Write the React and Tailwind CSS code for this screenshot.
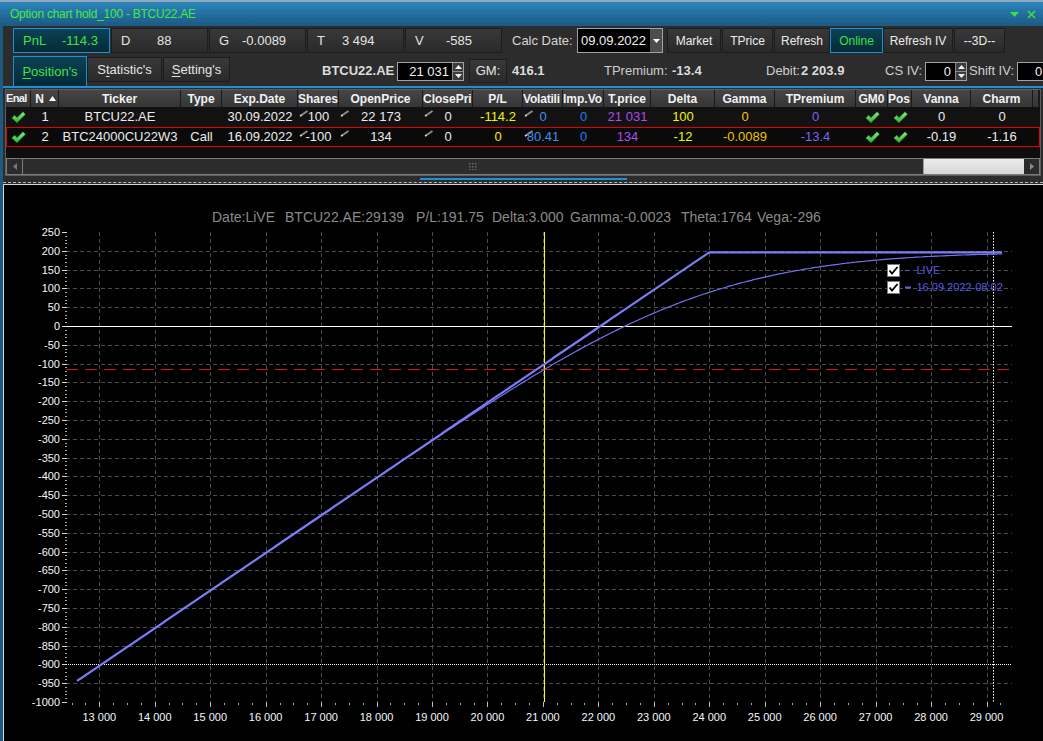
import React from "react";

// chart scale (page pixels)
const sx = (v) => 99.3 + (v - 13000) * 0.05545;
const sy = (p) => 326 - p * 0.376;

const ncdf = (x) => {
  const t = 1 / (1 + 0.2316419 * Math.abs(x));
  const d = 0.3989423 * Math.exp((-x * x) / 2);
  const p = d * t * (0.3193815 + t * (-0.3565638 + t * (1.781478 + t * (-1.821256 + t * 1.330274))));
  return x > 0 ? 1 - p : p;
};
const callPrice = (s) => {
  const k = 24000;
  const sq = 0.8041 * Math.sqrt(7 / 365);
  const d1 = (Math.log(s / k) + 0.5 * sq * sq) / sq;
  return s * ncdf(d1) - k * ncdf(d1 - sq);
};
const expiry = (s) => 0.1 * (s - 22173) + 13.4 - 0.1 * Math.max(s - 24000, 0);
const live = (s) => 0.1 * (s - 22173) + 13.4 - 0.1 * callPrice(s);

const curve = (f) => {
  const pts = [];
  for (let s = 12600; s <= 29280; s += 40) pts.push(`${sx(s).toFixed(1)},${sy(f(s)).toFixed(1)}`);
  return "M" + pts.join(" L");
};

const Check = () => (
  <svg width="15" height="13" viewBox="0 0 15 13">
    <defs>
      <linearGradient id="ck" x1="0" y1="0" x2="0" y2="1">
        <stop offset="0" stopColor="#8af08a" />
        <stop offset="1" stopColor="#2fae2f" />
      </linearGradient>
    </defs>
    <path d="M0.8 7 L3.6 4.3 L6 6.7 L12 0.8 L14.4 3.3 L6 11.8 Z" fill="url(#ck)" stroke="#238a23" strokeWidth="0.6" strokeLinejoin="round" />
  </svg>
);

const Pencil = () => (
  <svg width="10" height="7" viewBox="0 0 10 7" className="absolute left-[1px] top-[3px]">
    <path d="M1.5 5.8 L8.5 1" stroke="#8a8a8a" strokeWidth="2" />
    <path d="M1 6.2 L2.6 5.1" stroke="#d8d8d8" strokeWidth="1.6" />
  </svg>
);

const Spinner = () => (
  <div className="w-[11px] h-full flex flex-col border-l border-[#8a8a8a] bg-[#3c3c3c]">
    <div className="flex-1 flex items-center justify-center border-b border-[#8a8a8a]">
      <svg width="7" height="4" viewBox="0 0 7 4"><path d="M0 4 L3.5 0 L7 4 Z" fill="#f2f2f2" /></svg>
    </div>
    <div className="flex-1 flex items-center justify-center">
      <svg width="7" height="4" viewBox="0 0 7 4"><path d="M0 0 L3.5 4 L7 0 Z" fill="#f2f2f2" /></svg>
    </div>
  </div>
);

const stats = [
  { l: "PnL", v: "-114.3", lw: "w-[39px]", active: true },
  { l: "D", v: "88", lw: "w-[36px]" },
  { l: "G", v: "-0.0089", lw: "w-[23px]" },
  { l: "T", v: "3 494", lw: "w-[25px]" },
  { l: "V", v: "-585", lw: "w-[31px]" },
];

const buttons = [
  { t: "Market", w: "w-[54px] ml-[4px]" },
  { t: "TPrice", w: "w-[51px] ml-[1px]" },
  { t: "Refresh", w: "w-[56px] ml-[1px]" },
  { t: "Online", w: "w-[53px]", active: true },
  { t: "Refresh IV", w: "w-[70px]" },
  { t: "--3D--", w: "w-[51px] ml-[1px]" },
];

// header labels as the grid shows them (clipped by narrow columns)
const cols = [
  { h: "Enal", w: "w-[25px]", cls: "justify-start text-[11px] tracking-[-0.6px]" },
  { h: "N", w: "w-[28px]", sort: true },
  { h: "Ticker", w: "w-[122px]" },
  { h: "Type", w: "w-[41px]" },
  { h: "Exp.Date", w: "w-[76px]" },
  { h: "Shares", w: "w-[41px]", cls: "justify-start" },
  { h: "OpenPrice", w: "w-[84px]" },
  { h: "ClosePri", w: "w-[50px]", cls: "justify-start" },
  { h: "P/L", w: "w-[50px]" },
  { h: "Volatili", w: "w-[40px]", cls: "justify-start tracking-[-0.2px]" },
  { h: "Imp.Vo", w: "w-[41px]", cls: "justify-start" },
  { h: "T.price", w: "w-[47px]" },
  { h: "Delta", w: "w-[64px]" },
  { h: "Gamma", w: "w-[60px]" },
  { h: "TPremium", w: "w-[81px]" },
  { h: "GM0", w: "w-[32px]" },
  { h: "Pos", w: "w-[24px]", cls: "justify-start" },
  { h: "Vanna", w: "w-[59px]" },
  { h: "Charm", w: "w-[62px]" },
  { h: "", w: "w-[6px]" },
];

const YEL = "text-[#f4f400]";
const BLU = "text-[#3f8ff0]";
const BLU2 = "text-[#1f7cf2]";
const PUR = "text-[#b04ae8]";
const ORA = "text-[#f2c200]";
const VIO = "text-[#7a62f4]";

const rows = [
  [
    { check: true }, { v: "1" }, { v: "BTCU22.AE" }, { v: "" }, { v: "30.09.2022" },
    { v: "100", pen: true }, { v: "22 173", pen: true }, { v: "0", pen: true },
    { v: "-114.2", c: YEL }, { v: "0", c: BLU, pen: true }, { v: "0", c: BLU2 },
    { v: "21 031", c: PUR }, { v: "100", c: YEL }, { v: "0", c: ORA }, { v: "0", c: VIO },
    { check: true }, { check: true }, { v: "0" }, { v: "0" }, { v: "" },
  ],
  [
    { check: true }, { v: "2" }, { v: "BTC24000CU22W3" }, { v: "Call" }, { v: "16.09.2022" },
    { v: "-100", pen: true }, { v: "134", pen: true }, { v: "0", pen: true },
    { v: "0", c: YEL }, { v: "80.41", c: BLU, pen: true }, { v: "0", c: BLU2 },
    { v: "134", c: PUR }, { v: "-12", c: YEL }, { v: "-0.0089", c: ORA }, { v: "-13.4", c: VIO },
    { check: true }, { check: true }, { v: "-0.19" }, { v: "-1.16" }, { v: "" },
  ],
];

const titleParts = [
  [212, "Date:LiVE"],
  [285, "BTCU22.AE:29139"],
  [416, "P/L:191.75"],
  [492, "Delta:3.000"],
  [570, "Gamma:-0.0023"],
  [681, "Theta:1764"],
  [757, "Vega:-296"],
];

const Chart = () => {
  const yVals = [];
  for (let v = 250; v >= -1000; v -= 50) yVals.push(v);
  const yMinor = [];
  for (let v = 250; v >= -1000; v -= 10) if (v % 50 !== 0) yMinor.push(v);
  const xVals = [];
  for (let v = 13000; v <= 29000; v += 1000) xVals.push(v);
  const xMinor = [];
  for (let v = 12500; v <= 29250; v += 250) if (v % 1000 !== 0) xMinor.push(v);

  return (
    <svg width="1039" height="556" className="block">
      <g transform="translate(-4 -185)" fontFamily="'Liberation Sans', Arial, sans-serif">
        {titleParts.map(([x, t]) => (
          <text key={t} x={x} y={221.5} fontSize="14" fill="#8a8a8a">{t}</text>
        ))}

        {/* grid */}
        {yVals.filter((v) => v <= 200 && v >= -950 && v !== 0 && v !== -900).map((v) => (
          <line key={"h" + v} x1="66" x2="1012" y1={Math.round(sy(v)) + 0.5} y2={Math.round(sy(v)) + 0.5} stroke="#4c4c4c" strokeDasharray="4 3" />
        ))}
        {xVals.map((v) => (
          <g key={"v" + v}>
            <line x1={Math.round(sx(v)) + 0.5} x2={Math.round(sx(v)) + 0.5} y1="232" y2="702" stroke="#4c4c4c" strokeDasharray="4 3" />
            <line x1={Math.round(sx(v)) + 0.5} x2={Math.round(sx(v)) + 0.5} y1="702" y2="707" stroke="#bdbdbd" />
          </g>
        ))}
        {xMinor.map((v) => (
          <line key={"xm" + v} x1={Math.round(sx(v)) + 0.5} x2={Math.round(sx(v)) + 0.5} y1="703" y2="705" stroke="#a8a8a8" />
        ))}

        {/* y axis */}
        {yMinor.map((v) => (
          <line key={"ym" + v} x1="65" x2="67" y1={Math.round(sy(v)) + 0.5} y2={Math.round(sy(v)) + 0.5} stroke="#a8a8a8" />
        ))}
        {yVals.map((v) => (
          <g key={"yl" + v}>
            <line x1="62" x2="67" y1={Math.round(sy(v)) + 0.5} y2={Math.round(sy(v)) + 0.5} stroke="#d8d8d8" />
            <text x="60" y={sy(v) + 4} fontSize="11" textAnchor="end" fill="#f4f7ff">{v}</text>
          </g>
        ))}
        {xVals.map((v) => (
          <text key={"xl" + v} x={sx(v)} y="720.5" fontSize="11" textAnchor="middle" fill="#f4f7ff">
            {`${Math.floor(v / 1000)} 000`}
          </text>
        ))}

        {/* reference lines */}
        <line x1="66" x2="1012" y1="326.5" y2="326.5" stroke="#ffffff" />
        <line x1="66" x2="1012" y1="369.5" y2="369.5" stroke="#d01a1a" strokeDasharray="12 7" />
        <line x1="66" x2="1012" y1="664.5" y2="664.5" stroke="#ffffff" strokeDasharray="1 1" />
        <line x1="993.5" x2="993.5" y1="232" y2="702" stroke="#ffffff" strokeDasharray="1.5 1.5" />
        <line x1="544.5" x2="544.5" y1="232" y2="702" stroke="#ffff00" />

        {/* curves */}
        <path d={curve(live)} fill="none" stroke="#7272f2" strokeWidth="1.2" />
        <path d={curve(expiry)} fill="none" stroke="#7c7cf6" strokeWidth="2.2" />

        {/* legend */}
        <rect x="887.5" y="264.5" width="12" height="12" fill="#ffffff" stroke="#7a7a7a" />
        <path d="M889.5 270.5 L892 273.5 L897.5 267" fill="none" stroke="#000" strokeWidth="1.8" />
        <line x1="905" x2="909" y1="270.5" y2="270.5" stroke="#6060e6" />
        <text x="916.5" y="274.3" fontSize="11" fill="#5858e2">LIVE</text>
        <rect x="887.5" y="281.5" width="12" height="12" fill="#ffffff" stroke="#7a7a7a" />
        <path d="M889.5 287.5 L892 290.5 L897.5 284" fill="none" stroke="#000" strokeWidth="1.8" />
        <line x1="905" x2="911" y1="287.5" y2="287.5" stroke="#6060e6" strokeWidth="2" />
        <text x="916.5" y="291.3" fontSize="11" fill="#5858e2">16.09.2022-08:02</text>
      </g>
    </svg>
  );
};

const App = () => {
  return (
    <div className="w-[1043px] h-[741px] overflow-hidden flex flex-col bg-[#2c2c2c] font-['Liberation_Sans',Arial,sans-serif] text-[13px] text-[#e4e4e4]">
      {/* title bar */}
      <div className="h-[26px] shrink-0 flex items-center pl-[10px] pr-[7px] border-t-2 border-[#8ea8bc] bg-linear-to-b from-[#2c84bc] to-[#1b5a83]">
        <span className="text-[12px] tracking-[-0.25px] text-[#45ea45]">Option chart hold_100 - BTCU22.AE</span>
        <div className="ml-auto flex items-center gap-[8px]">
          <svg width="9" height="5" viewBox="0 0 9 5"><path d="M0 0 L9 0 L4.5 5 Z" fill="#3ee03e" /></svg>
          <svg width="9" height="9" viewBox="0 0 9 9"><path d="M1 1 L8 8 M8 1 L1 8" stroke="#3ee03e" strokeWidth="1.6" /></svg>
        </div>
      </div>

      <div className="flex flex-1 min-h-0">
        <div className="w-[3px] shrink-0 bg-[#1c5a80]" />
        <div className="flex-1 min-w-0 flex flex-col">
          {/* row 1: greeks + buttons */}
          <div className="mt-[2px] h-[25px] shrink-0 flex pl-[10px] overflow-hidden">
            <div className="flex gap-[1px]">
              {stats.map((s) => (
                <div
                  key={s.l}
                  className={`w-[97px] shrink-0 flex items-center pl-[9px] border ${
                    s.active
                      ? "border-[#1b8fd8] bg-linear-to-b from-[#0b4256] to-[#062a37] text-[#40e440]"
                      : "border-[#1d1d1d] bg-linear-to-b from-[#393939] to-[#2a2a2a]"
                  }`}
                >
                  <span className={s.lw}>{s.l}</span>
                  <span>{s.v}</span>
                </div>
              ))}
            </div>
            <span className="ml-[10px] w-[65px] shrink-0 self-center text-[#d6d6d6]">Calc Date:</span>
            <div className="w-[86px] shrink-0 flex bg-black border border-[#a2a2a2]">
              <span className="flex-1 self-center pl-[3px] text-[#f0f0f0]">09.09.2022</span>
              <div className="w-[12px] flex items-center justify-center bg-[#4d4d4d]">
                <svg width="7" height="4" viewBox="0 0 7 4"><path d="M0 0 L7 0 L3.5 4 Z" fill="#ffffff" /></svg>
              </div>
            </div>
            {buttons.map((b) => (
              <div
                key={b.t}
                className={`${b.w} shrink-0 flex items-center justify-center text-[12px] border ${
                  b.active
                    ? "border-[#1b8fd8] bg-linear-to-b from-[#0b4256] to-[#062a37] text-[#3ee03e]"
                    : "border-[#1d1d1d] bg-linear-to-b from-[#393939] to-[#292929] text-[#ececec]"
                }`}
              >
                {b.t}
              </div>
            ))}
          </div>

          {/* row 2: tabs + quote */}
          <div className="mt-[3px] h-[30px] shrink-0 flex items-center pl-[10px] overflow-hidden">
            <div className="w-[74px] shrink-0 self-stretch flex items-center justify-center border border-b-0 border-[#1b8fd8] bg-linear-to-b from-[#0b4256] to-[#062a37] text-[#40e440]">
              <span><span className="underline underline-offset-2">P</span>osition's</span>
            </div>
            <div className="w-[75px] h-[25px] shrink-0 self-start mt-[1px] flex items-center justify-center border border-[#1d1d1d] bg-linear-to-b from-[#393939] to-[#2a2a2a]">
              <span>S<span className="underline underline-offset-2">t</span>atistic's</span>
            </div>
            <div className="ml-[1px] w-[67px] h-[25px] shrink-0 self-start mt-[1px] flex items-center justify-center border border-[#1d1d1d] bg-linear-to-b from-[#393939] to-[#2a2a2a]">
              <span><span className="underline underline-offset-2">S</span>etting's</span>
            </div>
            <span className="ml-[92px] w-[75px] shrink-0 font-bold text-[#dcdcdc]">BTCU22.AE</span>
            <div className="w-[67px] h-[19px] shrink-0 flex bg-black border border-[#a2a2a2]">
              <span className="flex-1 text-right pr-[3px] leading-[17px] text-[#f0f0f0]">21 031</span>
              <Spinner />
            </div>
            <div className="ml-[5px] w-[38px] h-[24px] shrink-0 flex items-center justify-center border border-[#1d1d1d] bg-linear-to-b from-[#393939] to-[#2a2a2a]">GM:</div>
            <span className="ml-[5px] w-[92px] shrink-0 font-bold text-[#dcdcdc]">416.1</span>
            <span className="w-[68px] shrink-0 text-[#cfcfcf]">TPremium:</span>
            <span className="w-[94px] shrink-0 font-bold text-[#dcdcdc]">-13.4</span>
            <span className="w-[35px] shrink-0 text-[#cfcfcf]">Debit:</span>
            <span className="w-[84px] shrink-0 font-bold text-[#dcdcdc]">2 203.9</span>
            <span className="w-[40px] shrink-0 text-[#cfcfcf]">CS IV:</span>
            <div className="w-[42px] h-[19px] shrink-0 flex bg-black border border-[#a2a2a2]">
              <span className="flex-1 text-right pr-[4px] leading-[17px] text-[#f0f0f0]">0</span>
              <Spinner />
            </div>
            <span className="ml-[2px] w-[48px] shrink-0 text-[#cfcfcf]">Shift IV:</span>
            <div className="w-[40px] h-[19px] shrink-0 bg-black border border-[#a2a2a2] pl-[17px] leading-[17px] text-[#f0f0f0]">0</div>
          </div>

          <div className="h-[2px] shrink-0 bg-[#1b8fd8]" />

          {/* positions table */}
          <div className="mt-[1px] ml-[2px] w-[1036px] shrink-0 flex flex-col border border-[#5c5c5c] bg-[#0e0e0e]">
            <div className="h-[17px] flex bg-[#1c1c1c]">
              {cols.map((c, i) => (
                <div
                  key={i}
                  className={`${c.w} shrink-0 h-full flex items-center overflow-hidden whitespace-nowrap border-r border-[#1a1a1a] bg-linear-to-b from-[#464646] to-[#353535] font-bold text-[#f2f2f2] ${
                    c.cls || "justify-center text-[12px]"
                  } ${c.cls && !c.cls.includes("text-[11px]") ? "text-[12px]" : ""}`}
                >
                  {c.sort ? (
                    <span className="flex items-center gap-[5px] pl-[2px]">
                      N
                      <svg width="7" height="5" viewBox="0 0 7 5"><path d="M0 5 L3.5 0 L7 5 Z" fill="#ffffff" /></svg>
                    </span>
                  ) : (
                    c.h
                  )}
                </div>
              ))}
            </div>
            {rows.map((r, ri) => (
              <div
                key={ri}
                className={`h-[20px] flex ${ri === 1 ? "ring-1 ring-inset ring-[#e40000] bg-[#0a0a0a]" : "bg-[#121212]"}`}
              >
                {r.map((cell, ci) => (
                  <div
                    key={ci}
                    className={`${cols[ci].w} shrink-0 relative flex items-center justify-center whitespace-nowrap ${cell.c || "text-[#ececec]"}`}
                  >
                    {cell.pen && <Pencil />}
                    {cell.check ? <Check /> : cell.v}
                  </div>
                ))}
              </div>
            ))}
            <div className="h-[11px]" />
            {/* horizontal scrollbar */}
            <div className="h-[17px] flex border border-[#7c7c7c] bg-[#2b2b2b]">
              <div className="w-[16px] shrink-0 flex items-center justify-center border-r border-[#7c7c7c]">
                <svg width="4" height="7" viewBox="0 0 4 7"><path d="M4 0 L0 3.5 L4 7 Z" fill="#777777" /></svg>
              </div>
              <div className="flex-1 flex items-center justify-center bg-[#2c2c2c]">
                <svg width="9" height="7" viewBox="0 0 9 7">
                  {[0, 3, 6].map((x) => [0, 3, 6].map((y) => (
                    <rect key={x + "-" + y} x={x} y={y} width="1.5" height="1.5" fill="#6a6a6a" />
                  )))}
                </svg>
              </div>
              <div className="w-[101px] shrink-0 border-l border-[#9a9a9a] bg-linear-to-b from-[#ececec] to-[#d6d6d6]" />
              <div className="w-[15px] shrink-0 flex items-center justify-center bg-[#2b2b2b]">
                <svg width="4" height="7" viewBox="0 0 4 7"><path d="M0 0 L4 3.5 L0 7 Z" fill="#8a8a8a" /></svg>
              </div>
            </div>
          </div>

          {/* splitter */}
          <div className="shrink-0 pt-[2px]">
            <div className="ml-[417px] w-[207px] h-[2px] bg-[#1b8fd8]" />
            <div className="mt-[2px] border-t border-dashed border-[#b8b8b8]" />
          </div>

          {/* chart */}
          <div className="mt-[1px] flex-1 min-h-0 overflow-hidden bg-black border-t border-l border-[#d6d6d6]">
            <Chart />
          </div>
        </div>
      </div>
    </div>
  );
};

export default App;
